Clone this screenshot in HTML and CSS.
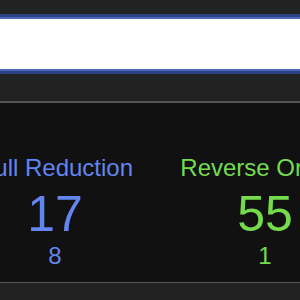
FILE: index.html
```html
<!DOCTYPE html>
<html lang="en">
<head>
    <meta charset="UTF-8">
    <meta name="viewport" content="width=device-width, initial-scale=1.0">
    <title>Stats</title>
    <link rel="stylesheet" href="styles.css">
</head>
<body>
    <div class="search-wrap">
        <input class="search" type="text" value="">
    </div>
    <div class="panel">
        <div class="stats">
            <div class="stat blue">
                <div class="label">Null Reduction</div>
                <div class="value">17</div>
                <div class="sub">8</div>
            </div>
            <div class="stat green">
                <div class="label">Reverse Orders</div>
                <div class="value">55</div>
                <div class="sub">1</div>
            </div>
        </div>
    </div>
</body>
</html>
```
FILE: styles.css
```css
body {
    font-family: 'Liberation Sans', Arial, sans-serif;
    background-color: #222222;
    margin: 0;
    overflow: hidden;
}
.search-wrap {
    padding-top: 17px;
    margin: 0 -10px;
    height: 84px;
}
.search {
    display: block;
    box-sizing: border-box;
    width: 100%;
    height: 54px;
    margin: 0;
    background: #ffffff;
    border: 2px solid #4a68c0;
    box-shadow: 0 0 0 3px #2b4282;
    outline: none;
}
.panel {
    background-color: #111111;
    border-top: 2px solid #555555;
    border-bottom: 1px solid #555555;
    padding: 53px 0 14px;
}
.stats {
    display: grid;
    grid-template-columns: repeat(2, 210px);
    margin-left: -50px;
    width: max-content;
}
.stat {
    text-align: center;
    white-space: nowrap;
}
.blue {
    color: #6385f0;
}
.green {
    color: #74dc4c;
}
.label {
    font-size: 24px;
    line-height: 24px;
}
.value {
    font-size: 50px;
    line-height: 50px;
    margin-top: 9px;
}
.sub {
    font-size: 24px;
    line-height: 24px;
    margin-top: 5px;
}
```
